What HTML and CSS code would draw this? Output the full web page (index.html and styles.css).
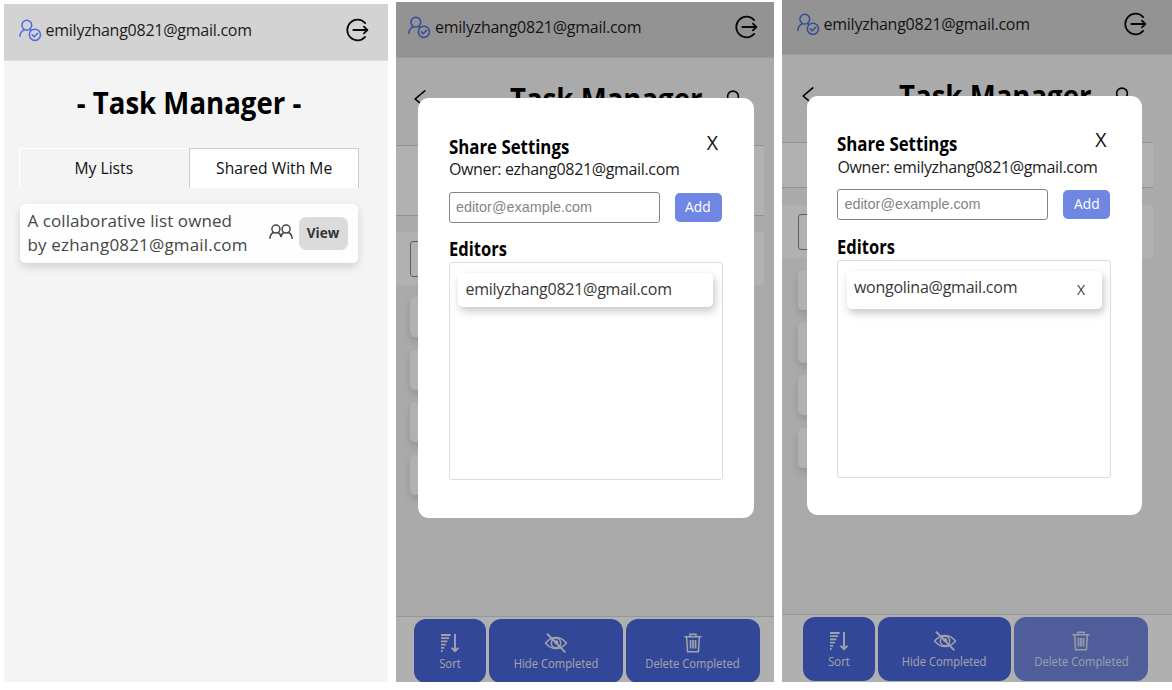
FILE: index.html
```
<!DOCTYPE html>
<html lang="en">
<head>
<meta charset="utf-8">
<title>Task Manager</title>
<link rel="stylesheet" href="styles.css">
</head>
<body>
<svg class="defs" width="0" height="0">
  <symbol id="user" viewBox="0 0 23 23">
    <g fill="none" stroke="currentColor" stroke-width="1.5" stroke-linecap="round">
      <circle cx="7.8" cy="6.2" r="4.9"/>
      <path d="M.9 17.3c.2-3.3 2-5.5 4.3-6.4M10.6 10.4l1.2.9"/>
      <circle cx="15.9" cy="15.8" r="5.6"/>
      <path d="M13.2 15.7l2 2 3.6-3.4"/>
    </g>
  </symbol>
  <symbol id="logout" viewBox="0 0 24 24">
    <g fill="none" stroke="currentColor" stroke-width="1.8" stroke-linecap="round" stroke-linejoin="round">
      <path d="M20.2 5.1A10.3 10.3 0 1 0 20.2 18.9"/>
      <path d="M8.3 12H22.3M18.9 8.7L22.4 12l-3.5 3.3"/>
    </g>
  </symbol>
  <symbol id="people" viewBox="0 0 24 16">
    <g fill="none" stroke="currentColor" stroke-width="1.5" stroke-linecap="round">
      <circle cx="6.9" cy="5.1" r="4"/><circle cx="17.1" cy="5.1" r="4"/>
      <path d="M.9 14.3c.2-3.2 1.7-4.9 3.7-5.8M9.2 8.5c1.500.8 2.500 2.400 2.800 4.600.3-2.200 1.300-3.800 2.800-4.600M19.400 8.500c2 .9 3.500 2.600 3.700 5.800"/>
    </g>
  </symbol>
  <symbol id="sort" viewBox="0 0 20 20">
    <path fill="none" stroke="currentColor" stroke-width="1.8" d="M1 2h9.6M1 5.2h8M1 8.4h6.4M1 11.6h4.8M1 14.8h3.2M1 18h1.6"/>
    <path fill="none" stroke="currentColor" stroke-width="1.9" d="M15 1v17M11.6 14.8l3.4 3.3 3.4-3.3"/>
  </symbol>
  <symbol id="hide" viewBox="0 0 24 21">
    <g fill="none" stroke="currentColor" stroke-width="1.6" stroke-linejoin="round">
      <path d="M1 10.5C4 7 7.8 4.7 12 4.7S20 7 23 10.5C20 14 16.2 16.3 12 16.3S4 14 1 10.5z"/>
      <circle cx="12" cy="10.5" r="4.9"/>
      <path stroke-width="2" d="M2.5 .6L21.8 20.3"/>
    </g>
    <circle cx="12.3" cy="9.6" r="2.1" fill="currentColor"/>
  </symbol>
  <symbol id="trash" viewBox="0 0 18 20">
    <g fill="none" stroke="currentColor" stroke-width="1.5">
      <path d="M.4 3.7h17.2M6 3.5V1.3h6v2.2M2.6 3.7l1 15.1h10.8l1-15.1"/>
      <path stroke-width="1.7" d="M6.5 7v8.5M9 7v8.5M11.5 7v8.5"/>
    </g>
  </symbol>
  <symbol id="back" viewBox="0 0 12 18">
    <path fill="none" stroke="currentColor" stroke-width="1.6" stroke-linecap="round" d="M10.8 .9L1.2 9l9.6 8.1"/>
  </symbol>
  <symbol id="person" viewBox="0 0 18 20">
    <g fill="none" stroke="currentColor" stroke-width="1.6"><circle cx="9" cy="6.5" r="5.4"/><path d="M1 19c.5-4 2.5-6 5-7.5M17 19c-.5-4-2.5-6-5-7.5"/></g>
  </symbol>
</svg>

<main class="gallery">
  <section class="phone home">
    <header class="topbar">
      <svg class="user"><use href="#user"/></svg>
      <span class="email">emilyzhang0821@gmail.com</span>
      <svg class="logout"><use href="#logout"/></svg>
    </header>
    <h1 class="title">- Task Manager -</h1>
    <nav class="tabs"><div class="tab"><span class="narrow">My Lists</span></div><div class="tab shared"><span class="narrow">Shared With Me</span></div></nav>
    <article class="list">
      <p class="list-name">A collaborative list owned<br><span class="wider">by ezhang0821@gmail.com</span></p>
      <svg class="people"><use href="#people"/></svg>
      <div class="view"><span class="narrow">View</span></div>
    </article>
  </section>

  <section class="phone second">
    <header class="topbar">
      <svg class="user"><use href="#user"/></svg>
      <span class="email">emilyzhang0821@gmail.com</span>
      <svg class="logout"><use href="#logout"/></svg>
    </header>
    <div class="heading">
      <svg class="back"><use href="#back"/></svg>
      <h1 class="title">Task Manager</h1>
      <svg class="person"><use href="#person"/></svg>
    </div>
    <div class="strip name"></div>
    <div class="strip entry"><div class="field"></div></div>
    <div class="tasks"><i></i><i></i><i></i><i></i></div>
    <footer class="actions">
      <div class="action sort"><svg class="i-sort"><use href="#sort"/></svg><span class="narrow">Sort</span></div>
      <div class="action"><svg class="i-hide"><use href="#hide"/></svg><span class="narrow">Hide Completed</span></div>
      <div class="action"><svg class="i-trash"><use href="#trash"/></svg><span class="narrow">Delete Completed</span></div>
    </footer>
    <div class="overlay">
      <div class="modal">
        <div class="modal-head"><h2>Share Settings</h2><span class="close">X</span></div>
        <p class="owner">Owner: ezhang0821@gmail.com</p>
        <div class="add-row"><span class="input">editor@example.com</span><div class="add"><span class="narrow">Add</span></div></div>
        <h2 class="editors">Editors</h2>
        <div class="box"><div class="editor">emilyzhang0821@gmail.com</div></div>
      </div>
    </div>
  </section>

  <section class="phone third">
    <header class="topbar">
      <svg class="user"><use href="#user"/></svg>
      <span class="email">emilyzhang0821@gmail.com</span>
      <svg class="logout"><use href="#logout"/></svg>
    </header>
    <div class="heading">
      <svg class="back"><use href="#back"/></svg>
      <h1 class="title">Task Manager</h1>
      <svg class="person"><use href="#person"/></svg>
    </div>
    <div class="strip name"></div>
    <div class="strip entry"><div class="field"></div></div>
    <div class="tasks"><i></i><i></i><i></i><i></i></div>
    <footer class="actions">
      <div class="action sort"><svg class="i-sort"><use href="#sort"/></svg><span class="narrow">Sort</span></div>
      <div class="action"><svg class="i-hide"><use href="#hide"/></svg><span class="narrow">Hide Completed</span></div>
      <div class="action disabled"><svg class="i-trash"><use href="#trash"/></svg><span class="narrow">Delete Completed</span></div>
    </footer>
    <div class="overlay">
      <div class="modal">
        <div class="modal-head"><h2>Share Settings</h2><span class="close">X</span></div>
        <p class="owner">Owner: emilyzhang0821@gmail.com</p>
        <div class="add-row"><span class="input">editor@example.com</span><div class="add"><span class="narrow">Add</span></div></div>
        <h2 class="editors">Editors</h2>
        <div class="box"><div class="editor removable">wongolina@gmail.com<span class="remove">X</span></div></div>
      </div>
    </div>
  </section>
</main>
</body>
</html>
```
FILE: styles.css
```
* { box-sizing: border-box; }
body { margin: 0; background: #fff; font-family: "Open Sans", sans-serif; color: #111; }
h1, h2, p { margin: 0; }
svg { flex: none; display: block; }
.defs { position: absolute; }
.narrow { display: inline-block; transform: scaleX(.92); }

.gallery { display: flex; align-items: flex-start; width: 1172px; height: 690px; overflow: hidden; }
.phone { position: relative; flex: none; display: flex; flex-direction: column; overflow: hidden; background: #f4f4f4; white-space: nowrap; }
.home { width: 384px; height: 678px; margin: 4px 8px 0 4px; }
.second { width: 378px; height: 680px; margin: 2px 8px 0 0; --pad: 12.5px; }
.third { width: 390px; height: 682px; --pad: 15px; }

/* top bar */
.topbar { display: flex; align-items: center; flex: none; height: 57px; padding: 0 19.5px 4px 14.5px; background: #d3d3d3; border-bottom: 1px solid #dedede; }
.second .topbar { height: 56px; padding: 0 16.5px 5px 12px; }
.third .topbar { height: 55px; padding: 0 25.5px 6px 14.5px; }
.user { width: 23px; height: 23px; color: #4a6be0; }
.email { flex: 1; margin-left: 4px; font-size: 16px; line-height: 22px; letter-spacing: -.25px; color: #1c1c1c; }
.logout { width: 24px; height: 24px; color: #0c0c0c; }
.title { font-size: 31px; line-height: 42px; font-weight: 700; color: #000; transform: scaleX(.89); }

/* lists page */
.home .title { margin: 20px 14px 0 0; text-align: center; }
.tabs { display: flex; width: 340px; height: 40px; margin: 25px 0 0 15px; font-size: 17px; line-height: 37px; text-align: center; }
.tab { flex: 1; border: 1px solid #fff; border-bottom: 0; border-right: 0; color: #111; }
.shared { background: #fff; border: 1px solid #cdcdcd; border-bottom: 0; }
.list { display: flex; align-items: center; width: 338px; height: 59px; margin: 16px 0 0 16.4px; padding: 0 10.5px 0 7px; border-radius: 5px; background: #fefefe; box-shadow: 0 4px 8px rgba(0,0,0,.14); }
.list-name { flex: 1; font-size: 17px; line-height: 23.5px; letter-spacing: .09px; color: #474747; padding-bottom: 2px; }
.wider { letter-spacing: .18px; }
.people { width: 24px; height: 16px; margin: -3px 6px 0 0; color: #444; }
.view { width: 49px; height: 33px; border-radius: 7px; background: #dbdbdb; text-align: center; font-size: 15px; font-weight: 700; line-height: 30px; color: #333; }
.view .narrow { transform: scaleX(.9); }

/* task page behind the dialog */
.heading { display: flex; align-items: flex-start; flex: none; height: 87px; padding: 20px 0 0 calc(var(--pad) + 5px); }
.back { width: 12px; height: 18px; margin-top: 12px; color: #000; }
.heading .title { width: 194px; margin: -1px 0 0 84.5px; transform-origin: left; }
.person { width: 18px; height: 20px; margin: 12px 0 0 20px; color: #000; }
.strip { flex: none; width: 368px; background: #fefefe; }
.third .strip { width: 371px; }
.name { height: 71px; border: solid #cfcfcf; border-width: 1px 0; }
.third .name { height: 46px; }
.entry { height: 52.5px; margin-top: 16px; padding: 9px 0 0 calc(var(--pad) + 1.4px); }
.third .entry { margin-top: 17px; }
.field { width: 200px; height: 36px; border: 1.5px solid #858585; border-radius: 3px; }
.tasks { display: grid; gap: 12.5px; padding: 12.5px 0 0 calc(var(--pad) + 1.4px); }
.tasks i { width: 336px; height: 40px; border-radius: 5px; background: #fefefe; box-shadow: 0 4px 8px rgba(0,0,0,.14); }
.actions { display: flex; gap: 3px; flex: none; height: 66px; margin-top: auto; padding: 2px 0 0 calc(var(--pad) + 5.7px); background: #fcfcfc; border-top: 1px solid #d9d9d9; }
.third .actions { height: 68px; }
.action { display: flex; flex-direction: column; align-items: center; flex: none; width: 133.7px; height: 64px; padding-top: 14px; border-radius: 12px; background: #4a66da; color: #e6e9f6; font-size: 12.5px; line-height: 17px; }
.action .narrow { transform: scaleX(.9); }
.sort { width: 72px; }
.disabled { background: #7187dd; color: #dce1f4; }
.action svg { height: 20px; margin-bottom: 2px; }
.i-sort { width: 20px; }
.i-hide { width: 24px; }
.i-trash { width: 18px; }

/* share dialog */
.overlay { position: absolute; inset: 0; padding: 96px 0 0 calc(var(--pad) + 9.9px); background: rgba(0,0,0,.3); }
.third .overlay { padding-top: 95.5px; }
.modal { width: 335.5px; height: 419.5px; padding: 36.5px 31px 0 30.5px; border-radius: 11px; background: #fff; }
.modal-head { display: flex; justify-content: space-between; height: 24px; }
h2 { font-size: 19px; line-height: 24px; font-weight: 700; color: #000; transform: scaleX(.885); transform-origin: left; }
.close { margin: -6px 5px 0 0; font-size: 19.5px; line-height: 28px; }
.owner { margin-top: -.5px; font-size: 16px; line-height: 22px; letter-spacing: -.35px; color: #1c1c1c; }
.add-row { display: flex; align-items: center; justify-content: space-between; height: 31px; margin-top: 11.5px; }
.input { width: 211px; height: 31px; padding-left: 6px; border: 1.5px solid #858585; border-radius: 3px; font: 14.4px/29px "Liberation Sans", sans-serif; color: #858585; }
.add { width: 47px; height: 29px; margin-right: 1px; border-radius: 5px; background: #6f87e2; color: #fff; text-align: center; font-size: 15px; line-height: 27px; }
.editors { margin-top: 14.5px; transform: scaleX(.87); }
.box { height: 218px; margin-top: 1px; padding: 10px 8.5px; border: 1px solid #dcdcdc; border-radius: 3px; }
.editor { display: flex; justify-content: space-between; height: 34px; padding: 0 17px 0 7px; border-radius: 5px; background: #fff; box-shadow: 2px 4px 9px rgba(0,0,0,.23); font-size: 16px; line-height: 32px; letter-spacing: -.25px; color: #383838; }
.removable { height: 38px; }
.remove { font-size: 14px; line-height: 38px; }
```
